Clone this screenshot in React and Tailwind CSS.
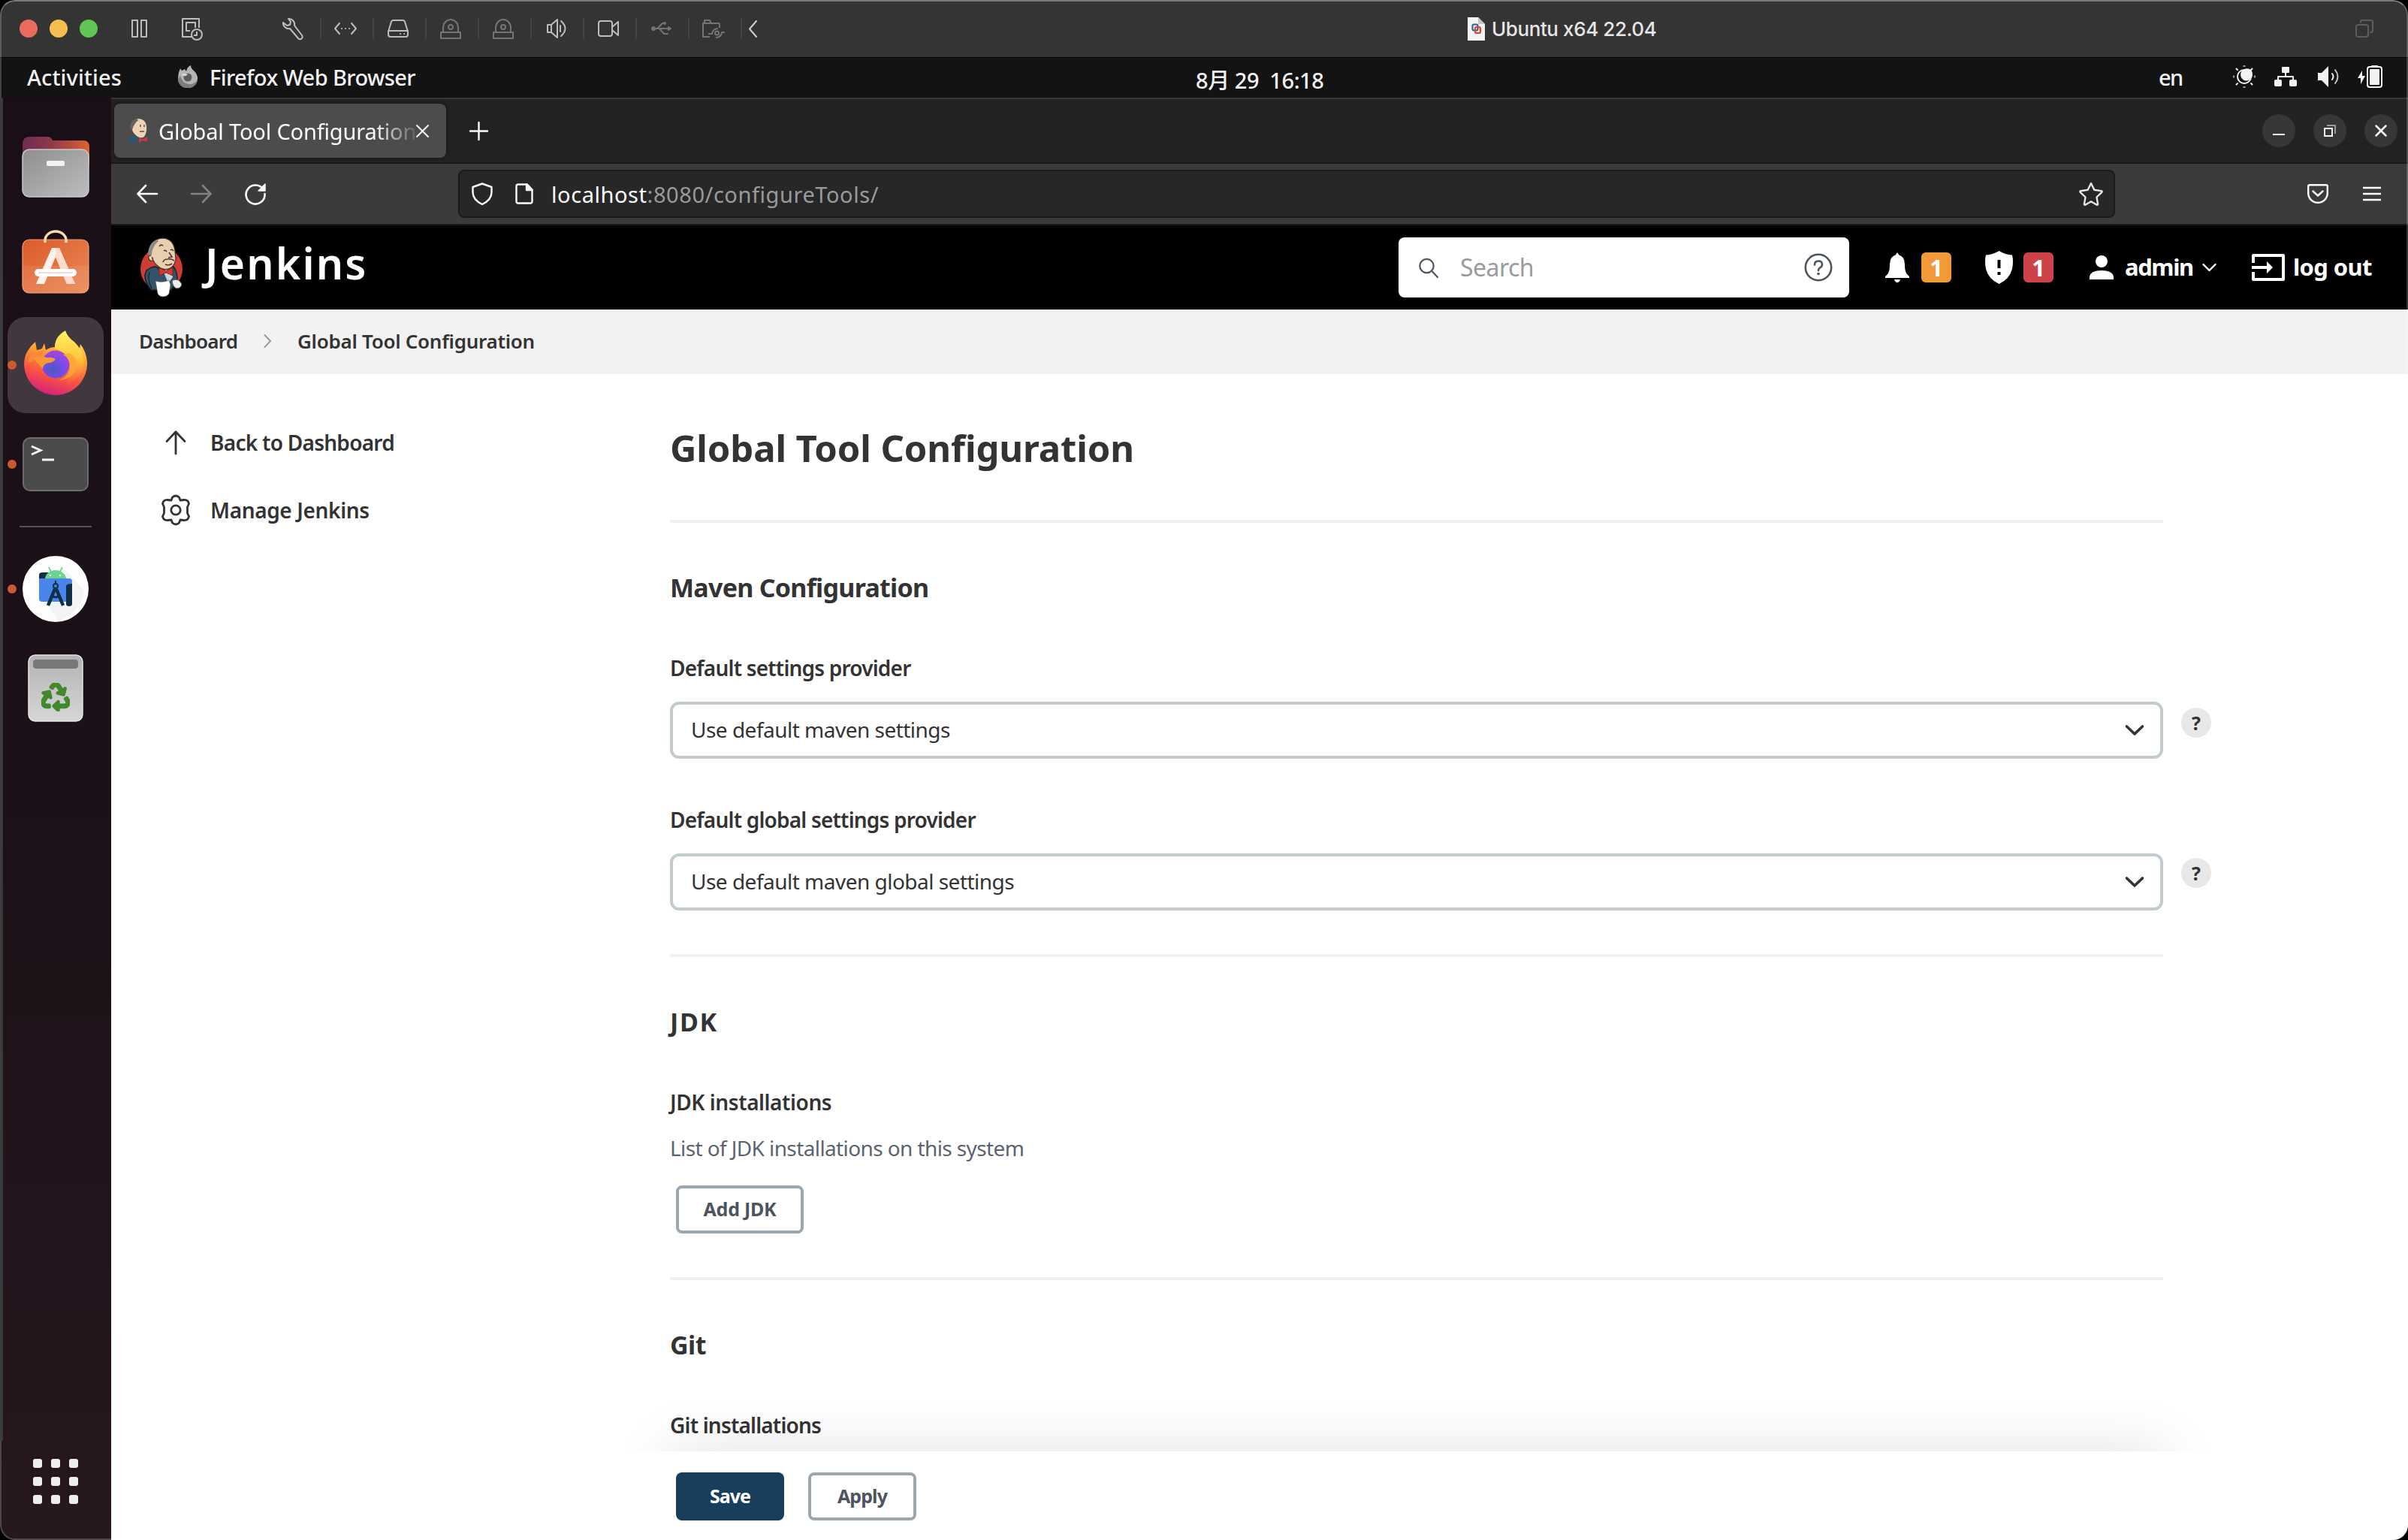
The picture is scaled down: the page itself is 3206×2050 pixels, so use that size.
import { FaRecycle } from "react-icons/fa";

const Svg = ({ w, h, vb, className = "", children, sw = 2, fill = "none", cap = "round" }) => (
  <svg
    width={w}
    height={h}
    viewBox={vb || `0 0 ${w} ${h}`}
    fill={fill}
    stroke="currentColor"
    strokeWidth={sw}
    strokeLinecap={cap}
    strokeLinejoin="round"
    className={"shrink-0 overflow-visible " + className}
  >
    {children}
  </svg>
);

/* ---------- virtual machine window title bar ---------- */

const ToolCell = ({ dim, children }) => (
  <div
    className={
      "flex h-7 w-[70px] items-center justify-center border-r-2 border-[#434343] pr-1 " +
      (dim ? "text-[#747474]" : "text-[#bdbdbd]")
    }
  >
    {children}
  </div>
);

const DiscDrive = () => (
  <Svg w={28} h={28} cap="butt">
    <path d="M4 18V13a10 11 0 0 1 20 0v5" />
    <circle cx="14" cy="12" r="3" />
    <rect x="1" y="19" width="26" height="8" />
  </Svg>
);

const TitleBar = () => (
  <div className="flex h-[77px] shrink-0 items-center border-b border-black bg-[#343434] pl-[26px] pr-[46px]">
    <div className="flex gap-4">
      <span className="size-6 rounded-full bg-[#ec6a5e]" />
      <span className="size-6 rounded-full bg-[#f4bf4f]" />
      <span className="size-6 rounded-full bg-[#61c554]" />
    </div>
    <Svg w={22} h={24} className="ml-[45px] text-[#bdbdbd]">
      <rect x="1" y="1" width="7" height="22" />
      <rect x="13" y="1" width="7" height="22" />
    </Svg>
    <Svg w={28} h={30} className="ml-[45px] mt-[2px] text-[#bdbdbd]" cap="butt">
      <path d="M13 25H1V1h22v12" />
      <path d="M11 17H6V6h12v7" />
      <circle cx="20" cy="22" r="7" />
      <path d="M20 18v5h-4" />
    </Svg>
    <div className="ml-[88px] flex">
      <ToolCell>
        <Svg w={28} h={28}>
          <path d="M8 1a7.500 7.500 0 0 1 8 9l10 13a3 3 0 0 1-5 4L10 14A7.500 7.500 0 0 1 1 6l5 4 4-1 1-4z" />
        </Svg>
      </ToolCell>
      <ToolCell>
        <Svg w={30} h={16}>
          <path d="M7 1 1 8l6 7M23 1l6 7-6 7" />
          <path d="M10 8h.1M15 8h.1M20 8h.1" />
        </Svg>
      </ToolCell>
      <ToolCell>
        <Svg w={28} h={24}>
          <path d="M1 16 5 3q.6-2 3-2h12q2.400 0 3 2l4 13v4q0 3-3 3H4q-3 0-3-3zM1 15h26" />
          <path d="M17 19h.1M22 19h.1" />
        </Svg>
      </ToolCell>
      <ToolCell dim>
        <DiscDrive />
      </ToolCell>
      <ToolCell dim>
        <DiscDrive />
      </ToolCell>
      <ToolCell>
        <Svg w={27} h={26}>
          <path d="M2 8h5l8-7v24l-8-7H2zM7 8v10M19 9v8M20 3q11 10 0 20" />
        </Svg>
      </ToolCell>
      <ToolCell>
        <Svg w={28} h={22}>
          <rect x="1" y="1" width="18" height="20" rx="3" />
          <path d="m19 9 8-7v18l-8-7" />
        </Svg>
      </ToolCell>
      <ToolCell dim>
        <Svg w={27} h={18}>
          <circle cx="3" cy="9" r="2" fill="currentColor" />
          <path d="M3 9h21M8 9l7-7h3M11 9l6 7h5M23 7l3 2-3 2z" />
          <circle cx="18" cy="2" r="1" fill="currentColor" />
        </Svg>
      </ToolCell>
      <ToolCell dim>
        <Svg w={30} h={24} cap="butt">
          <path d="M10 23H1V5h20q2 0 2 2v4M3 5V1h7l2 4" />
          <path d="M8 19h5q1-7 8-7M30 17h-4q-1 7-8 7" />
          <circle cx="19.500" cy="18" r="2.500" />
        </Svg>
      </ToolCell>
    </div>
    <Svg w={11} h={23} className="ml-[9px] text-[#d0d0d0]">
      <path d="M10 1 1 11.500 10 22" />
    </Svg>
    <svg width="23" height="31" viewBox="0 0 23 31" className="ml-[946px] shrink-0">
      <path d="M0 0h14l9 9v22H0z" fill="#f5f5f5" />
      <path d="M14 0v9h9z" fill="#c4c4c4" />
      <rect x="6.500" y="9.500" width="7" height="8" rx="2" fill="none" stroke="#2c66a8" strokeWidth="2.200" />
      <rect x="10" y="13" width="7" height="8" rx="2" fill="none" stroke="#e2402c" strokeWidth="2.200" />
    </svg>
    <span className="ml-[9px] mt-px whitespace-nowrap font-['Inter',sans-serif] text-[26px] font-medium leading-8 tracking-[-0.016em] text-[#e6e6e6]">
      Ubuntu x64 22.04
    </span>
    <Svg w={24} h={24} className="ml-auto text-[#5c5c5c]">
      <rect x="1" y="7" width="16" height="16" rx="3" />
      <path d="M7 4V3q0-2 2-2h12q2 0 2 2v12q0 2-2 2h-1" />
    </Svg>
  </div>
);

/* ---------- GNOME top bar ---------- */

const TopBar = () => (
  <div className="flex h-[53px] shrink-0 items-center whitespace-nowrap bg-[#131313] pl-[36px] text-[29px] font-medium leading-10 text-[#f2f2f2]">
    <span className="w-[200px] pb-px tracking-[0.003em]">Activities</span>
    <svg width="28" height="30" viewBox="0 0 28 30" className="mb-1 shrink-0">
      <path d="M4 4l2 3 4-2 2 3q1-6 6-8 0 4 4 7 5 5 5 10a12.500 12.500 0 0 1-26 0q0-7 3-13z" fill="#b5b5b5" />
      <path d="M1 18a13 12 0 0 0 26 1q-4 7-12 6T4 14z" fill="#7e7e7e" />
      <circle cx="14" cy="16" r="5.500" fill="#5b5b5b" />
      <path d="M5 12q5-2 9 0-3 3-5 2z" fill="#d8d8d8" />
    </svg>
    <span className="ml-[15px] w-[1313px] pb-px tracking-[-0.0206em]">Firefox Web Browser</span>
    <span className="w-[1282px] whitespace-pre pt-[7px] tracking-[-0.015em]">8月 29  16:18</span>
    <span className="w-[99px] pb-px tracking-[-0.055em]">en</span>
    <div className="mb-[3px] flex items-center text-[#f2f2f2]">
      <Svg w={30} h={30}>
        <circle cx="15" cy="15" r="9" />
        <path d="M13 8a8 8 0 1 0 11 8 9 9 0 0 0-2-7 9 9 0 0 0-9-1z" fill="currentColor" stroke="none" transform="translate(2 -3)" />
        <path d="M15 0v2M15 28v2M0 15h2M28 15h2" stroke="#9a9a9a" strokeWidth="3" strokeLinecap="butt" />
        <path d="M4.500 4.500 6 6M24 24l1.500 1.500M4.500 25.500 6 24M24 6l1.500-1.500" />
      </Svg>
      <Svg w={30} h={28} className="ml-[25px]" cap="butt">
        <rect x="10" y="1" width="10" height="8" rx="1" fill="currentColor" stroke="none" />
        <rect x="0" y="18" width="10" height="9" rx="2" fill="currentColor" stroke="none" />
        <rect x="20" y="18" width="10" height="9" rx="2" fill="currentColor" stroke="none" />
        <path d="M15 8v6M5 19v-5h20v5" />
      </Svg>
      <Svg w={29} h={28} className="ml-[28px]">
        <path d="M0 9h5l9-9v28l-9-9H0z" fill="currentColor" stroke="none" />
        <path d="M19 10q3 4 0 8" />
        <path d="M23 5q7 9 0 18" stroke="#c0c0c0" />
      </Svg>
      <Svg w={33} h={30} className="ml-[24px]">
        <path d="M6 7 0 17h4v8l6-11H6z" fill="currentColor" stroke="none" />
        <rect x="13" y="2" width="19" height="27" rx="3" />
        <rect x="16" y="5" width="13" height="21" rx="1" fill="currentColor" stroke="none" />
        <path d="M19 1h7" />
      </Svg>
    </div>
  </div>
);

/* ---------- dock ---------- */

const Slot = ({ running, active, children }) => (
  <div className="relative flex h-[132px] items-center justify-center">
    <div
      className={
        "flex size-32 items-center justify-center rounded-[24px] " + (active ? "bg-[#41373e]" : "")
      }
    >
      <svg width="96" height="96" viewBox="0 0 96 96">
        {children}
      </svg>
    </div>
    {running && <span className="absolute left-[10px] size-3 rounded-full bg-[#cc5a30]" />}
  </div>
);

const Dock = () => (
  <div className="relative flex w-[148px] shrink-0 flex-col bg-linear-to-b from-[#1a0f16] via-[#1c1118] to-[#27171f] pt-[26px]">
    <div className="absolute left-0 top-0 h-[1788px] w-1 rounded-l-full border-r-2 border-[#383838] bg-[#0c0e0e]" />
    <Slot>
      <defs>
        <linearGradient id="folderBack" x1="0" x2="1">
          <stop offset="0" stopColor="#6e2c52" />
          <stop offset="0.450" stopColor="#91394a" />
          <stop offset="1" stopColor="#e0622f" />
        </linearGradient>
        <linearGradient id="folderFront" x1="0" y1="0" x2="1" y2="1">
          <stop offset="0" stopColor="#8e8e8e" />
          <stop offset="1" stopColor="#bdbdbd" />
        </linearGradient>
      </defs>
      <path d="M4 18q0-10 9-10h24q5 0 7 5h41q8 0 8 9v24H4z" fill="url(#folderBack)" />
      <rect x="4" y="25" width="88" height="63" rx="9" fill="url(#folderFront)" stroke="#c9c9c9" strokeWidth="1.500" />
      <rect x="36" y="40" width="24" height="7" rx="2" fill="#f2f2f2" />
    </Slot>
    <Slot>
      <defs>
        <linearGradient id="store" x1="0" y1="0" x2="1" y2="1">
          <stop offset="0" stopColor="#dc5a2a" />
          <stop offset="1" stopColor="#ea8a58" />
        </linearGradient>
      </defs>
      <rect x="4" y="13" width="88" height="71" rx="9" fill="url(#store)" stroke="#f0a07a" strokeWidth="1.200" />
      <path d="M4 48h88v28q0 8-9 8H13q-9 0-9-8z" fill="#fff" opacity="0.080" />
      <path d="M34 17V14a14 12 0 0 1 28 0v3" fill="none" stroke="#f7dcae" strokeWidth="3.500" />
      <path d="M43 24h10l21 48H63L48 36 33 72H22z" fill="#fdf1ea" />
      <path d="M48 24h5l21 48H63L48 36z" fill="#fbdccb" />
      <rect x="20" y="52" width="56" height="10" rx="5" fill="#fff" />
      <path d="M25 57h46" stroke="#f6cdb8" strokeWidth="1.500" />
    </Slot>
    <Slot running active>
      <defs>
        <linearGradient id="foxBody" x1="0.700" y1="0" x2="0.400" y2="1">
          <stop offset="0" stopColor="#fff04a" />
          <stop offset="0.350" stopColor="#ffa935" />
          <stop offset="0.700" stopColor="#fb5440" />
          <stop offset="1" stopColor="#d4227e" />
        </linearGradient>
        <linearGradient id="foxTail" x1="0.500" y1="0" x2="0.500" y2="1">
          <stop offset="0" stopColor="#fff262" />
          <stop offset="0.500" stopColor="#ffc83c" />
          <stop offset="1" stopColor="#ff7a3c" stopOpacity="0.200" />
        </linearGradient>
        <radialGradient id="foxGlobe" cx="0.400" cy="0.700" r="0.750">
          <stop offset="0" stopColor="#4d57c4" />
          <stop offset="0.550" stopColor="#7a4be8" />
          <stop offset="1" stopColor="#b042d8" />
        </radialGradient>
      </defs>
      <path
        d="M21 17l2 11q5-1 7-2l3-7 2 9q6-4 12-4 0-14 14-22 3 9 12 15 4 4 7 9l1-6q8 10 9 24a42 42 0 0 1-84 4q0-12 5-19 4-7 10-12z"
        fill="url(#foxBody)"
      />
      <path d="M47 25q0-15 14-22 2 8 13 16 16 14 10 36-7 16-22 17 12-17-1-35-5-8-14-12z" fill="url(#foxTail)" />
      <circle cx="48" cy="47" r="18.500" fill="url(#foxGlobe)" />
      <path d="M11 44q2-12 14-14l10-2q-5 3-6 7-8 2-12 8z" fill="#f98a38" />
      <path d="M18 39q10-4 19-1 6-1 11 2-3 5-10 5-7 2-7 8-7-8-13-14z" fill="#f79a36" />
      <path d="M58 34q14 10 7 24-4 8-14 10 18 0 24-14 4-16-9-22z" fill="#fba638" opacity="0.850" />
    </Slot>
    <Slot running>
      <rect x="5" y="13" width="86" height="70" rx="9" fill="#4b4b4b" stroke="#6c6c6c" strokeWidth="2" />
      <path d="m16 24 12 5.500L16 35" fill="none" stroke="#f4f4f4" strokeWidth="3" />
      <path d="M30 42h16" stroke="#f4f4f4" strokeWidth="3" />
    </Slot>
    <div className="mx-[26px] my-4 h-[2px] bg-[#584e55]" />
    <Slot running>
      <circle cx="48" cy="48" r="44" fill="#fdfdfd" />
      <path d="M60 22 86 50q-2 20-18 32L52 90 34 66l30-4z" fill="#f3f3f3" />
      <path d="M26 34v-4q0-4 4-4h12v8z" fill="#0f3044" />
      <path d="m39 19 3 6M57 19l-3 6" stroke="#69d58d" strokeWidth="1.800" />
      <path d="M34 35a14 12 0 0 1 28 0z" fill="#69d58d" />
      <circle cx="41" cy="30" r="1.300" fill="#fff" />
      <circle cx="54" cy="30" r="1.300" fill="#fff" />
      <path d="M26 34h40q4 0 4 4v27H30q-4 0-4-4z" fill="#4a85ec" />
      <path d="M62 44q0-3 8-3v27q0 3-4 3t-4-3z" fill="#0f3044" />
      <circle cx="48" cy="44" r="3" fill="none" stroke="#0f3044" strokeWidth="2" />
      <path d="M47 48 38 70M49 48l9 22" stroke="#0f3044" strokeWidth="4.500" />
      <path d="M43 57q5 4 10 0" stroke="#0f3044" strokeWidth="3" fill="none" />
      <path d="M48 37v4" stroke="#0f3044" strokeWidth="2" />
    </Slot>
    <Slot>
      <defs>
        <linearGradient id="bin" x1="0" y1="0" x2="0" y2="1">
          <stop offset="0" stopColor="#b3b3b3" />
          <stop offset="1" stopColor="#d6d6d6" />
        </linearGradient>
      </defs>
      <rect x="12" y="4" width="72" height="88" rx="9" fill="url(#bin)" stroke="#e4e4e4" strokeWidth="1.500" />
      <rect x="18" y="10" width="60" height="12" rx="4" fill="#787878" />
      <FaRecycle x="29" y="41" size={38} color="#43882c" stroke="#43882c" strokeWidth="26" />
    </Slot>
    <div className="mx-auto mb-12 mt-auto grid grid-cols-3 gap-3">
      {Array.from({ length: 9 }, (_, i) => (
        <span key={i} className="size-3 rounded-[3px] bg-[#eeeeec]" />
      ))}
    </div>
  </div>
);

/* ---------- Firefox chrome ---------- */

const Butler = ({ w, h }) => (
  <svg width={w} height={h} viewBox="0 0 56 80" className="shrink-0">
    <ellipse cx="28" cy="42" rx="28" ry="29" fill="#cf3c33" />
    <path d="M8 44q7-5 12-5l15 8 9-8q5 6 5 18l-8 13H14Q5 58 6 50z" fill="#33536b" stroke="#16212b" strokeWidth="1.500" />
    <path d="M30 44l12-1 1 10-6 8z" fill="#c9d4da" />
    <path d="M12 22Q12 2 30 1q14 1 16 17l1 11q-2 11-10 13-8 2-14-4-6-5-7-11-5-1-4-5z" fill="#e9cfb0" stroke="#3c3028" strokeWidth="1.200" />
    <path d="M22 3Q11 7 10 22l4 5q1-6 2-10 2-7 8-12z" fill="#8c8a89" />
    <path d="M14 24q-4 0-3 4 1 4 5 3" fill="#e9cfb0" stroke="#3c3028" strokeWidth="1.200" />
    <path d="M25 12q2-3 5-1M31 18q2-2 4 1M40 17q2-2 4 1M38 20l4 6-5 1M30 33q1-4 6-4 5-1 9 2M33 36q5 2 9-1" fill="none" stroke="#4f3d30" strokeWidth="1.600" />
    <path d="M25 40l9 5 9-5v11l-9-4-9 4z" fill="#d33833" stroke="#7a1a18" strokeWidth="0.800" />
    <path d="M12 46q-3 10 3 22" fill="none" stroke="#16212b" strokeWidth="1.200" />
    <path d="M20 58q9 3 18-1l2 6-2 12q-3 4-8 4t-7-4z" fill="#fff" stroke="#555" strokeWidth="0.600" />
    <path d="M42 58q5-4 10 0l3 4q-1 6-7 6-5-2-6-10z" fill="#ececec" stroke="#555" strokeWidth="1" />
  </svg>
);

const WinButton = ({ children }) => (
  <span className="flex size-11 items-center justify-center rounded-full bg-[#373737] text-[#f4f4f4]">{children}</span>
);

const TabStrip = () => (
  <div className="flex h-[88px] items-center border-b-2 border-t-2 border-b-[#181818] border-t-[#363636] bg-[#222222] pl-1 pr-[14px]">
    <div className="flex h-[72px] w-[442px] items-center rounded-lg bg-[#4c4c4c] pl-4 text-[#fbfbfe] shadow-[0_0_4px_rgba(0,0,0,0.5)]">
      <svg width="32" height="32" viewBox="0 0 32 32" className="shrink-0">
        <path d="M2 32q0-9 9-10l6 3 7-3q5 1 5 10z" fill="#33536b" />
        <path d="M7 9Q8 0 17 0q9 1 10 10 1 8-3 14-5 3-10-1-7-5-7-14z" fill="#edd3b4" />
        <path d="M14 0Q5 2 5 12l3 3q2-8 8-13z" fill="#6b625c" />
        <path d="M17 25l5 2 6-3v7l-6-2-5 3z" fill="#d33833" />
        <path d="M19 8v3M24 8v3M18 17h6" stroke="#6b4c38" strokeWidth="1.500" />
      </svg>
      <span className="ml-[11px] mt-px w-[342px] whitespace-nowrap text-[29px] leading-10 tracking-[-0.006em] [mask-image:linear-gradient(to_right,black_84%,transparent_102%)]">
        Global Tool Configuration
      </span>
      <Svg w={17} h={17} className="ml-[1px]">
        <path d="m1 1 15 15M16 1 1 16" />
      </Svg>
    </div>
    <Svg w={25} h={25} className="ml-[31px] text-[#fbfbfe]" sw={2.400}>
      <path d="M12.500 1v23M1 12.500h23" />
    </Svg>
    <div className="ml-auto flex gap-6">
      <WinButton>
        <Svg w={16} h={14} cap="butt">
          <path d="M0 12h16" />
        </Svg>
      </WinButton>
      <WinButton>
        <Svg w={16} h={16} cap="butt">
          <rect x="1" y="5" width="10" height="10" strokeLinejoin="miter" />
          <path d="M4 1h11v11" stroke="#9a9a9a" />
        </Svg>
      </WinButton>
      <WinButton>
        <Svg w={16} h={16} sw={2.500}>
          <path d="m1.500 1.500 13 13M14.500 1.500l-13 13" />
        </Svg>
      </WinButton>
    </div>
  </div>
);

const NavBar = () => (
  <div className="flex h-[82px] items-center border-b-2 border-[#1a1a1a] bg-[#3b3b3b] pl-[34px] text-[#fbfbfe]">
    <Svg w={28} h={26} sw={2.600}>
      <path d="M12 2 1.500 13 12 24M2 13h25" />
    </Svg>
    <Svg w={28} h={26} sw={2.600} className="ml-11 text-[#828282]">
      <path d="m16 2 10.500 11L16 24M26 13H1" />
    </Svg>
    <Svg w={28} h={28} sw={2.600} className="ml-11">
      <path d="M25 9A12.500 12.500 0 1 0 26.500 14" />
      <path d="M27 1v9h-9z" fill="currentColor" strokeWidth="1.500" />
    </Svg>
    <div className="ml-[256px] flex h-16 w-[2206px] items-center rounded-lg border-2 border-[#1a1a1a] bg-[#272727] pl-4 pr-[14px]">
      <Svg w={28} h={30} sw={2.400}>
        <path d="M14 1.500 26.500 6v7q0 10-12.500 16Q1.500 23 1.500 13V6z" />
      </Svg>
      <Svg w={24} h={28} sw={2.400} className="ml-[30px]">
        <path d="M4 1.500h12l6.500 7V24q0 2.500-2.500 2.500H4q-2.500 0-2.500-2.500V4q0-2.500 2.500-2.500z" />
        <path d="M15 1.500V9h7.500z" fill="currentColor" />
      </Svg>
      <span className="ml-[24px] mt-px whitespace-nowrap text-[29px] leading-10 tracking-[0.0194em] text-[#9a9a9c]">
        <span className="text-[#fbfbfe]">localhost</span>:8080/configureTools/
      </span>
      <Svg w={32} h={32} sw={2.400} className="ml-auto text-[#e6e6e8]">
        <path d="m16 2 4.300 8.800 9.700 1.400q1.200.500.300 1.600l-6.800 6.700 1.600 9.400q-.2 1.300-1.400.8L16 26.200l-7.700 4.500q-1.200.500-1.400-.8l1.600-9.400-6.800-6.700q-.9-1.100.3-1.600l9.700-1.400z" />
      </Svg>
    </div>
    <Svg w={28} h={26} sw={2.400} className="ml-[256px]">
      <path d="M3 1.200h22q1.800 0 1.800 1.800v9a12.800 12.800 0 0 1-25.600 0V3Q1.200 1.200 3 1.200z" />
      <path d="m7.500 9.500 6.500 6 6.500-6" />
    </Svg>
    <Svg w={24} h={20} className="ml-[46px]" cap="butt" sw={2.400}>
      <path d="M0 2h24M0 10h24M0 18h24" />
    </Svg>
  </div>
);

/* ---------- Jenkins page ---------- */

const Badge = ({ className, children }) => (
  <span className={"flex h-10 w-10 items-center justify-center rounded-md text-[31px] font-bold leading-10 text-white " + className}>
    {children}
  </span>
);

const JenkinsHeader = () => (
  <div className="flex h-[112px] items-center bg-black pl-[39px] text-[32px] leading-10 text-white">
    <Butler w={56} h={80} />
    <span className="ml-[30px] pb-[13px] text-[57px] font-semibold leading-[64px] tracking-[0.038em]">Jenkins</span>
    <div className="ml-auto flex h-20 w-[600px] items-center rounded-lg bg-white pl-[27px] pr-[22px] text-[#4d545d]">
      <Svg w={26} h={27} sw={2.200}>
        <circle cx="10.500" cy="11" r="9.200" />
        <path d="m17.500 18 7.500 8" />
      </Svg>
      <span className="ml-[29px] tracking-[-0.017em] text-[#9b9b9b]">Search</span>
      <Svg w={38} h={38} sw={2.600} className="ml-auto">
        <circle cx="19" cy="19" r="17.200" />
        <path d="M14 15.500q0-5 5-5t5 4.500q0 3-3 4.500-2 1.200-2 3.500" />
        <path d="M19 27.500h.1" strokeWidth="3.600" />
      </Svg>
    </div>
    <Svg w={32} h={40} className="ml-12" fill="currentColor" sw={0}>
      <path d="M16 0l2.500 3.500Q26 6 26 16q0 10 3 13l3 3v2H0v-2l3-3q3-3 3-13Q6 6 13.500 3.500zM12 36h8q-1 4-4 4t-4-4z" />
    </Svg>
    <Badge className="ml-4 bg-[#f29a38]">1</Badge>
    <Svg w={37} h={44} className="ml-[45px]" sw={0}>
      <path d="M18.500 0Q27 5 36 5.500q2 8 0 18.500-3 13-17.500 20Q4 37 1 24-1 13.500 1 5.500 10 5 18.500 0z" fill="currentColor" />
      <path d="M18.500 12v11" stroke="#000" strokeWidth="4" strokeLinecap="butt" />
      <path d="M18.500 28v4" stroke="#000" strokeWidth="4" strokeLinecap="butt" />
    </Svg>
    <Badge className="ml-[14px] bg-[#cd4349]">1</Badge>
    <Svg w={32} h={32} className="ml-12" fill="currentColor" sw={0}>
      <circle cx="16" cy="8" r="8" />
      <path d="M0 32v-4q2-8 16-8t16 8v4z" />
    </Svg>
    <span className="ml-[15px] w-[103px] pb-[2px] text-[31px] font-bold tracking-[-0.045em]">admin</span>
    <Svg w={19} h={12} sw={2.400}>
      <path d="m1.500 2 8 8 8-8" />
    </Svg>
    <Svg w={44} h={36} className="ml-[47px]" cap="butt" sw={4}>
      <path d="M2 12V2h40v32H2V24M0 18h22" />
      <path d="M20 10l8 8-8 8z" fill="currentColor" strokeWidth="0" />
    </Svg>
    <span className="ml-[11px] w-[153px] whitespace-nowrap pb-[2px] text-[31px] font-bold tracking-[-0.02em]">log out</span>
  </div>
);

const Breadcrumbs = () => (
  <div className="flex h-[86px] items-center bg-[#f2f2f2] pb-[3px] pl-[37px] text-[26px] font-semibold leading-10 text-[#333333]">
    <span className="w-[166px] tracking-[-0.03em]">Dashboard</span>
    <Svg w={11} h={18} className="text-[#9b9b9b]">
      <path d="m1.500 1 7.500 8-7.500 8" />
    </Svg>
    <span className="ml-[34px] tracking-[-0.0105em]">Global Tool Configuration</span>
  </div>
);

const SideLink = ({ icon, label, tracking }) => (
  <div className="flex h-[90px] items-center">
    <span className="flex w-10 justify-center">{icon}</span>
    <span className={"ml-[26px] whitespace-nowrap text-[28px] font-semibold leading-10 " + tracking}>{label}</span>
  </div>
);

const SectionTitle = ({ children, tracking }) => (
  <h2 className={"mt-[62px] text-[34px] font-bold leading-[48px] " + tracking}>{children}</h2>
);

const Label = ({ className = "mt-[63px]", tracking = "tracking-[-0.0286em]", children }) => (
  <div className={"text-[28px] font-semibold leading-10 " + className + " " + tracking}>{children}</div>
);

const Rule = ({ className = "mt-[58px]" }) => <div className={"h-1 bg-[#f0f0f0] " + className} />;

const Select = ({ children, helpOffset }) => (
  <div className="mt-[25px] flex w-[2052px] items-start gap-6">
    <div className="flex h-[76px] w-[1988px] items-center justify-between rounded-xl border-4 border-[#c3cbcf] px-6 pr-[22px]">
      <span className="pb-[2px] text-[28px] leading-10 tracking-[-0.0183em]">{children}</span>
      <Svg w={24} h={14} sw={3.600}>
        <path d="m1.500 2 10.500 10L22.500 2" />
      </Svg>
    </div>
    <span className={"flex size-10 items-center justify-center rounded-full bg-[#e8e8e8] text-[25px] font-bold leading-none " + helpOffset}>
      ?
    </span>
  </div>
);

const Button = ({ className, children }) => (
  <span className={"flex h-16 items-center justify-center rounded-lg pb-px text-[25px] font-bold " + className}>
    {children}
  </span>
);

const outline = "border-4 border-[#9ba6ae] text-[#4d545d] bg-white";

const JenkinsBody = () => (
  <div className="flex flex-1 bg-white text-[#333333]">
    <div className="w-[744px] shrink-0 pl-[66px] pt-[46px]">
      <SideLink
        label="Back to Dashboard"
        tracking="tracking-[-0.026em]"
        icon={
          <Svg w={28} h={32} sw={2.800}>
            <path d="M14 31V2M2 14.500 14 1.800l12 12.700" />
          </Svg>
        }
      />
      <SideLink
        label="Manage Jenkins"
        tracking="tracking-[-0.013em]"
        icon={
          <Svg w={40} h={42} sw={2.800}>
            <circle cx="20" cy="21" r="6.200" />
            <path d="M15.500 4q4.500-4 9 0l1.500 4 4.500-.5q6-.5 7 5l-2 4.500 0 8 2 4.500q-1 5.500-7 5l-4.500-.5-1.500 4q-4.500 4-9 0l-1.500-4-4.500.5q-6 .5-7-5l2-4.500 0-8-2-4.500q1-5.500 7-5l4.500.5z" />
          </Svg>
        }
      />
    </div>
    <div className="flex w-[1988px] flex-col pt-[66px]">
      <h1 className="text-[49px] font-bold leading-[64px] tracking-[-0.0023em]">Global Tool Configuration</h1>
      <Rule className="mt-[64px]" />
      <SectionTitle tracking="tracking-[-0.0215em]">Maven Configuration</SectionTitle>
      <Label>Default settings provider</Label>
      <Select helpOffset="mt-2">Use default maven settings</Select>
      <Label className="mt-[61px]">Default global settings provider</Label>
      <Select helpOffset="mt-[6px]">Use default maven global settings</Select>
      <Rule />
      <SectionTitle tracking="tracking-[0.05em]">JDK</SectionTitle>
      <Label tracking="tracking-[-0.015em]">JDK installations</Label>
      <div className="mt-[21px] text-[28px] leading-10 tracking-[-0.0215em] text-[#5c6370]">
        List of JDK installations on this system
      </div>
      <Button className={"ml-2 mt-[30px] w-[170px] tracking-[-0.009em] " + outline}>Add JDK</Button>
      <Rule />
      <SectionTitle tracking="tracking-[-0.015em]">Git</SectionTitle>
      <Label>Git installations</Label>
      <div className="relative mt-[15px] flex h-[118px] gap-8 bg-white pl-2 pt-7">
        <div className="absolute -left-16 -right-16 bottom-full h-16 overflow-hidden">
          <div className="mx-16 mt-16 h-[118px] shadow-[0_0_80px_rgba(0,0,0,0.12)]" />
        </div>
        <Button className="w-36 bg-[#193e5c] tracking-[-0.0395em] text-white">Save</Button>
        <Button className={"w-36 tracking-[-0.037em] " + outline}>Apply</Button>
      </div>
    </div>
  </div>
);

export default function App() {
  return (
    <div className="h-[2050px] w-[3206px] overflow-hidden bg-black font-['Noto_Sans','Noto_Sans_CJK_SC',sans-serif]">
      <div className="relative flex h-full flex-col overflow-hidden rounded-[20px]">
        <TitleBar />
        <TopBar />
        <div className="flex min-h-0 flex-1">
          <Dock />
          <div className="flex min-w-0 flex-1 flex-col">
            <TabStrip />
            <NavBar />
            <JenkinsHeader />
            <Breadcrumbs />
            <JenkinsBody />
          </div>
        </div>
        <div className="pointer-events-none absolute inset-0 rounded-[20px] border-2 border-white/20 border-t-white/35" />
      </div>
    </div>
  );
}
